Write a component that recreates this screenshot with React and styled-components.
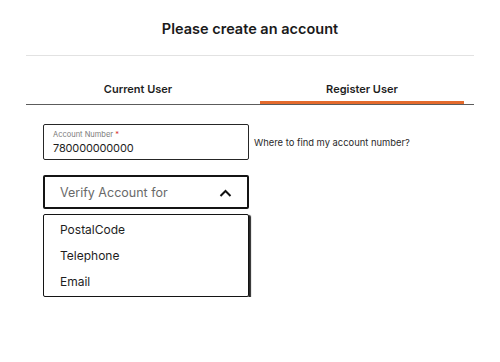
import React from "react";
import styled, { createGlobalStyle } from "styled-components";

const GlobalStyle = createGlobalStyle`
  body {
    margin: 0;
    background: #ffffff;
    font-family: Inter, "Noto Sans", sans-serif;
    color: #1b1b1b;
  }
`;

const Page = styled.div`
  padding: 0 26px;
`;

const Title = styled.h1`
  margin: 19px 0 0;
  font-size: 14.5px;
  line-height: 20px;
  font-weight: 600;
  text-align: center;
  color: #1a1a1a;
`;

const Divider = styled.hr`
  margin: 16px 0 0;
  border: 0;
  height: 1px;
  background: #e2e2e2;
`;

const TabStrip = styled.div`
  display: flex;
  border-bottom: 1px solid #5c5c5c;
`;

const Tab = styled.div`
  flex: 1;
  display: flex;
  flex-direction: column;
  padding-top: 26px;
  cursor: pointer;
`;

const TabLabel = styled.span`
  font-size: 11px;
  line-height: 14px;
  font-weight: 600;
  text-align: center;
  color: #1e1e1e;
`;

const TabBar = styled.span`
  height: 3px;
  margin: 5px 10px 0;
  background: ${({ $active }) => ($active ? "#e46a2c" : "transparent")};
`;

const Form = styled.div`
  display: flex;
  flex-direction: column;
  padding: 19px 0 0 17px;
`;

const FieldRow = styled.div`
  display: flex;
  align-items: center;
  gap: 5px;
`;

const InputBox = styled.div`
  box-sizing: border-box;
  width: 206px;
  height: 36px;
  padding: 5px 9px 0;
  border: 1px solid #262626;
  border-radius: 2px;
`;

const InputLabel = styled.div`
  font-size: 7.5px;
  line-height: 10px;
  color: #7a7a7a;
`;

const Required = styled.span`
  color: #d9302b;
`;

const InputValue = styled.div`
  font-size: 11px;
  line-height: 16px;
  color: #1e1e1e;
  letter-spacing: -0.15px;
`;

const HelpLink = styled.span`
  font-size: 9.4px;
  color: #2a2a2a;
`;

const Select = styled.div`
  box-sizing: border-box;
  width: 206px;
  height: 34px;
  margin-top: 15px;
  padding: 1px 15px 0;
  display: flex;
  align-items: center;
  justify-content: space-between;
  border: 2px solid #141414;
  border-radius: 2px;
`;

const SelectText = styled.span`
  font-size: 12.5px;
  color: #6a6a6a;
`;

const Menu = styled.ul`
  box-sizing: border-box;
  width: 206px;
  margin: 5px 0 0;
  padding: 2px 0 1px;
  list-style: none;
  border: 1px solid #141414;
  border-radius: 2px;
  box-shadow: 1.5px 1.5px 1px rgba(0, 0, 0, 0.85);
`;

const MenuItem = styled.li`
  padding-left: 16px;
  font-size: 12px;
  line-height: 26px;
  color: #1e1e1e;
`;

const ChevronUp = () => (
  <svg width="13" height="8" viewBox="0 0 13 8" fill="none">
    <path d="M1.5 7L6.5 2L11.5 7" stroke="#111" strokeWidth="2" />
  </svg>
);

const options = ["PostalCode", "Telephone", "Email"];

const App = () => (
  <Page>
    <GlobalStyle />
    <Title>Please create an account</Title>
    <Divider />
    <TabStrip>
      <Tab>
        <TabLabel>Current User</TabLabel>
        <TabBar />
      </Tab>
      <Tab>
        <TabLabel>Register User</TabLabel>
        <TabBar $active />
      </Tab>
    </TabStrip>
    <Form>
      <FieldRow>
        <InputBox>
          <InputLabel>
            Account Number <Required>*</Required>
          </InputLabel>
          <InputValue>780000000000</InputValue>
        </InputBox>
        <HelpLink>Where to find my account number?</HelpLink>
      </FieldRow>
      <Select>
        <SelectText>Verify Account for</SelectText>
        <ChevronUp />
      </Select>
      <Menu>
        {options.map((option) => (
          <MenuItem key={option}>{option}</MenuItem>
        ))}
      </Menu>
    </Form>
  </Page>
);

export default App;
